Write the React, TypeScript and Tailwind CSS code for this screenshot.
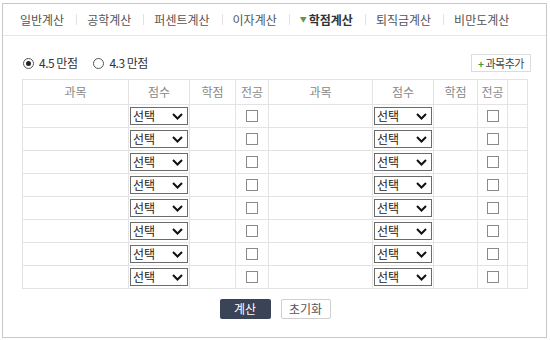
import React from 'react';

const tabs = ['일반계산', '공학계산', '퍼센트계산', '이자계산', '학점계산', '퇴직금계산', '비만도계산'];
const rows = Array.from({ length: 8 });

function Select() {
  return (
    <div className="mx-auto flex h-[18px] w-[58px] items-center justify-between border border-[#6b6b6b] bg-white pl-[2px] pr-[4px] text-[12px] leading-none text-[#222]">
      <span>선택</span>
      <svg width="11" height="7" viewBox="0 0 11 7">
        <path d="M1 1l4.5 4.5L10 1" fill="none" stroke="#111" strokeWidth="2" />
      </svg>
    </div>
  );
}

function Check() {
  return <div className="mx-auto h-[12px] w-[12px] border border-[#8a8a8a] bg-white" />;
}

function Radio({ checked, label }: { checked?: boolean; label: string }) {
  return (
    <label className="flex items-center gap-[5px]">
      <span className="flex h-[11px] w-[11px] items-center justify-center rounded-full border border-[#555] bg-white">
        {checked && <span className="h-[5px] w-[5px] rounded-full bg-[#222]" />}
      </span>
      <span className="tracking-[-0.5px] text-[#333]">{label}</span>
    </label>
  );
}

export default function App() {
  const cols = 'grid grid-cols-[106px_61px_46px_33px_104px_61px_44px_30px_20px]';
  const cell = 'flex items-center justify-center border-r border-[#e3e3e3]';

  return (
    <div
      className="ml-[2px] mt-[3px] flex h-[335px] w-[545px] flex-col border border-[#c9c9c9] bg-white text-[12px]"
      style={{ fontFamily: '"Noto Sans CJK KR", "Noto Sans", sans-serif' }}
    >
      {/* Tabs */}
      <div className="flex h-[32px] items-center border-b border-[#e6e6e6] pl-[17px] text-[#555]">
        {tabs.map((t, i) => (
          <div key={t} className="flex items-center">
            {i > 0 && <span className="ml-[12px] mr-[10px] h-[11px] w-px bg-[#e2e2e2]" />}
            {t === '학점계산' ? (
              <span className="flex items-center font-bold text-[#333]">
                <span className="mr-[2px] text-[7px] text-[#5a9a4a]">▼</span>
                {t}
              </span>
            ) : (
              <span>{t}</span>
            )}
          </div>
        ))}
      </div>

      <div className="flex flex-1 flex-col pl-[19px] pr-[18px]">
        {/* Options */}
        <div className="mt-[18px] flex h-[18px] items-center justify-between">
          <div className="flex items-center gap-[16px] pl-[1px]">
            <Radio checked label="4.5 만점" />
            <Radio label="4.3 만점" />
          </div>
          <button className="mr-[-3px] flex h-[18px] w-[60px] items-center justify-center border border-[#dcdcdc] bg-white text-[11px] tracking-[-0.5px] text-[#444]">
            <span className="mr-[2px] text-[10px] font-bold text-[#3c9a3c]">+</span>과목추가
          </button>
        </div>

        {/* Table */}
        <div className="mt-[7px] border-l border-t border-[#e3e3e3]">
          <div className={`${cols} h-[25px] border-b border-[#e3e3e3] text-[#888]`}>
            {['과목', '점수', '학점', '전공', '과목', '점수', '학점', '전공', ''].map((h, i) => (
              <div key={i} className={cell}>
                {h}
              </div>
            ))}
          </div>
          {rows.map((_, r) => (
            <div key={r} className={`${cols} h-[23px] border-b border-[#e3e3e3]`}>
              <div className={cell} />
              <div className={cell}>
                <Select />
              </div>
              <div className={cell} />
              <div className={cell}>
                <Check />
              </div>
              <div className={cell} />
              <div className={cell}>
                <Select />
              </div>
              <div className={cell} />
              <div className={cell}>
                <Check />
              </div>
              <div className={cell} />
            </div>
          ))}
        </div>

        {/* Buttons */}
        <div className="mt-[10px] flex justify-center gap-[10px]">
          <button className="h-[20px] w-[51px] rounded-[2px] bg-[#3b4357] text-[12px] text-white">계산</button>
          <button className="h-[20px] w-[50px] rounded-[2px] border border-[#cfcfcf] bg-white text-[12px] text-[#555]">
            초기화
          </button>
        </div>
      </div>
    </div>
  );
}
